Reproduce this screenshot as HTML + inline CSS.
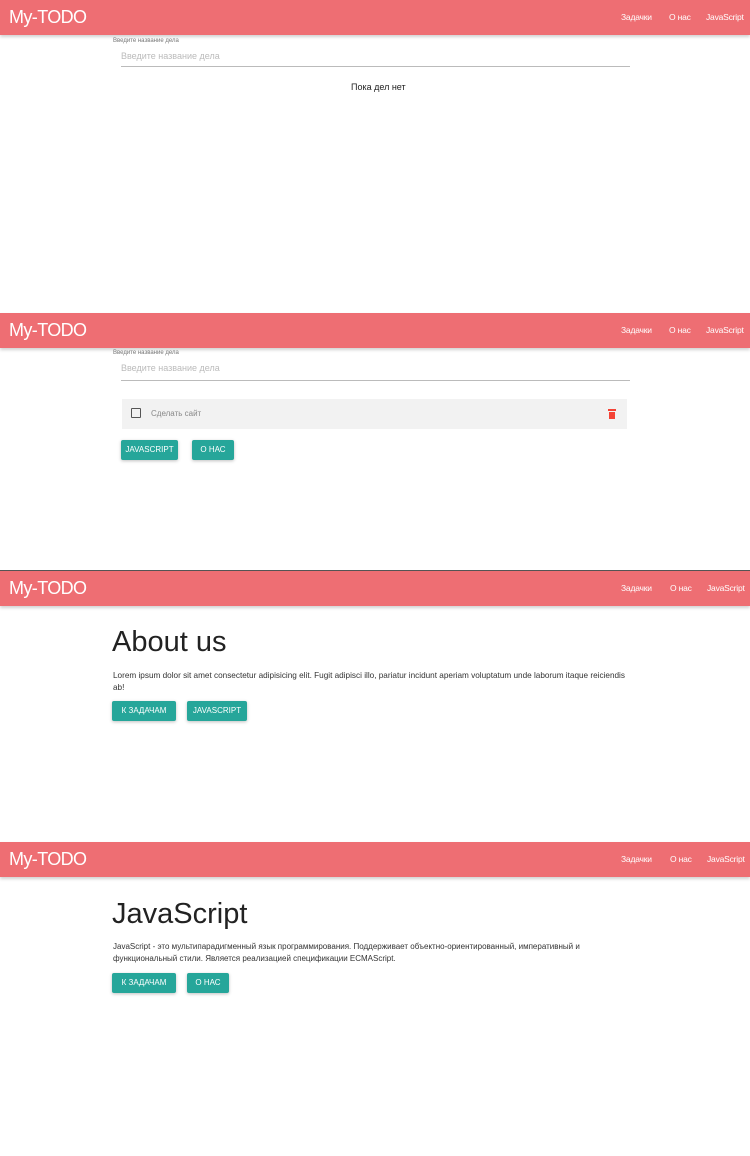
<!DOCTYPE html>
<html><head><meta charset="utf-8"><style>
*{margin:0;padding:0;box-sizing:border-box}
body{width:750px;height:1156px;position:relative;background:#fff;font-family:"Liberation Sans","Noto Sans CJK SC",sans-serif;overflow:hidden;color:#222}
.nav{position:absolute;left:0;width:750px;height:35px;background:#ee6e73;box-shadow:0 2px 3px rgba(0,0,0,.18)}
.nav .logo{position:absolute;left:9px;top:7px;font-size:18px;color:#fff;letter-spacing:-0.6px}
.nav .l{position:absolute;top:12px;font-size:8.5px;color:#fff;letter-spacing:-0.2px}
.a{position:absolute}
.lbl{font-size:6px;color:#777}
.ph{font-size:9px;color:#bbb}
.line{height:1px;background:#bbb;width:509px}
.btn{position:absolute;height:20px;background:#26a69a;color:#fff;font-size:8px;line-height:20px;text-align:center;border-radius:2px;box-shadow:0 1px 3px rgba(0,0,0,.25)}
h1{position:absolute;font-weight:300;font-size:29px;color:#222;left:112px}
.p{position:absolute;left:113px;width:525px;font-size:8px;line-height:12px;color:#333}
</style></head><body>
<div class="nav" style="top:0"><div class="logo">My-TODO</div><span class="l" style="left:621px">Задачки</span><span class="l" style="left:669px">О нас</span><span class="l" style="left:706px">JavaScript</span></div>
<div class="a lbl" style="left:113px;top:38px">Введите название дела</div>
<div class="a ph" style="left:121px;top:51px">Введите название дела</div>
<div class="a line" style="left:121px;top:66px"></div>
<div class="a" style="left:351px;top:82px;font-size:9px">Пока дел нет</div>

<div class="nav" style="top:313px"><div class="logo">My-TODO</div><span class="l" style="left:621px">Задачки</span><span class="l" style="left:669px">О нас</span><span class="l" style="left:706px">JavaScript</span></div>
<div class="a lbl" style="left:113px;top:350px">Введите название дела</div>
<div class="a ph" style="left:121px;top:363px">Введите название дела</div>
<div class="a line" style="left:121px;top:380px"></div>
<div class="a" style="left:122px;top:399px;width:505px;height:30px;background:#f2f2f2"></div>
<div class="a" style="left:131px;top:408px;width:10px;height:10px;border:1.5px solid #555;border-radius:1px"></div>
<div class="a" style="left:151px;top:409px;font-size:8px;color:#888">Сделать сайт</div>
<div class="a" style="left:608px;top:409px;width:8px;height:10px"><div style="height:2px;background:#f44336;margin-bottom:1px"></div><div style="height:7px;background:#f44336;margin:0 1px"></div></div>
<div class="btn" style="left:121px;top:440px;width:57px">JAVASCRIPT</div>
<div class="btn" style="left:192px;top:440px;width:42px">О НАС</div>

<div class="a" style="left:0;top:570px;width:750px;height:1px;background:#555"></div>
<div class="nav" style="top:571px"><div class="logo">My-TODO</div><span class="l" style="left:621px">Задачки</span><span class="l" style="left:670px">О нас</span><span class="l" style="left:707px">JavaScript</span></div>
<h1 style="top:626px">About us</h1>
<div class="p" style="top:670px;font-size:8.2px">Lorem ipsum dolor sit amet consectetur adipisicing elit. Fugit adipisci illo, pariatur incidunt aperiam voluptatum unde laborum itaque reiciendis<br>ab!</div>
<div class="btn" style="left:112px;top:701px;width:64px">К ЗАДАЧАМ</div>
<div class="btn" style="left:187px;top:701px;width:60px">JAVASCRIPT</div>

<div class="nav" style="top:842px"><div class="logo">My-TODO</div><span class="l" style="left:621px">Задачки</span><span class="l" style="left:670px">О нас</span><span class="l" style="left:707px">JavaScript</span></div>
<h1 style="top:898px">JavaScript</h1>
<div class="p" style="top:941px">JavaScript - это мультипарадигменный язык программирования. Поддерживает объектно-ориентированный, императивный и функциональный стили. Является реализацией спецификации ECMAScript.</div>
<div class="btn" style="left:112px;top:973px;width:64px">К ЗАДАЧАМ</div>
<div class="btn" style="left:187px;top:973px;width:42px">О НАС</div>
</body></html>
